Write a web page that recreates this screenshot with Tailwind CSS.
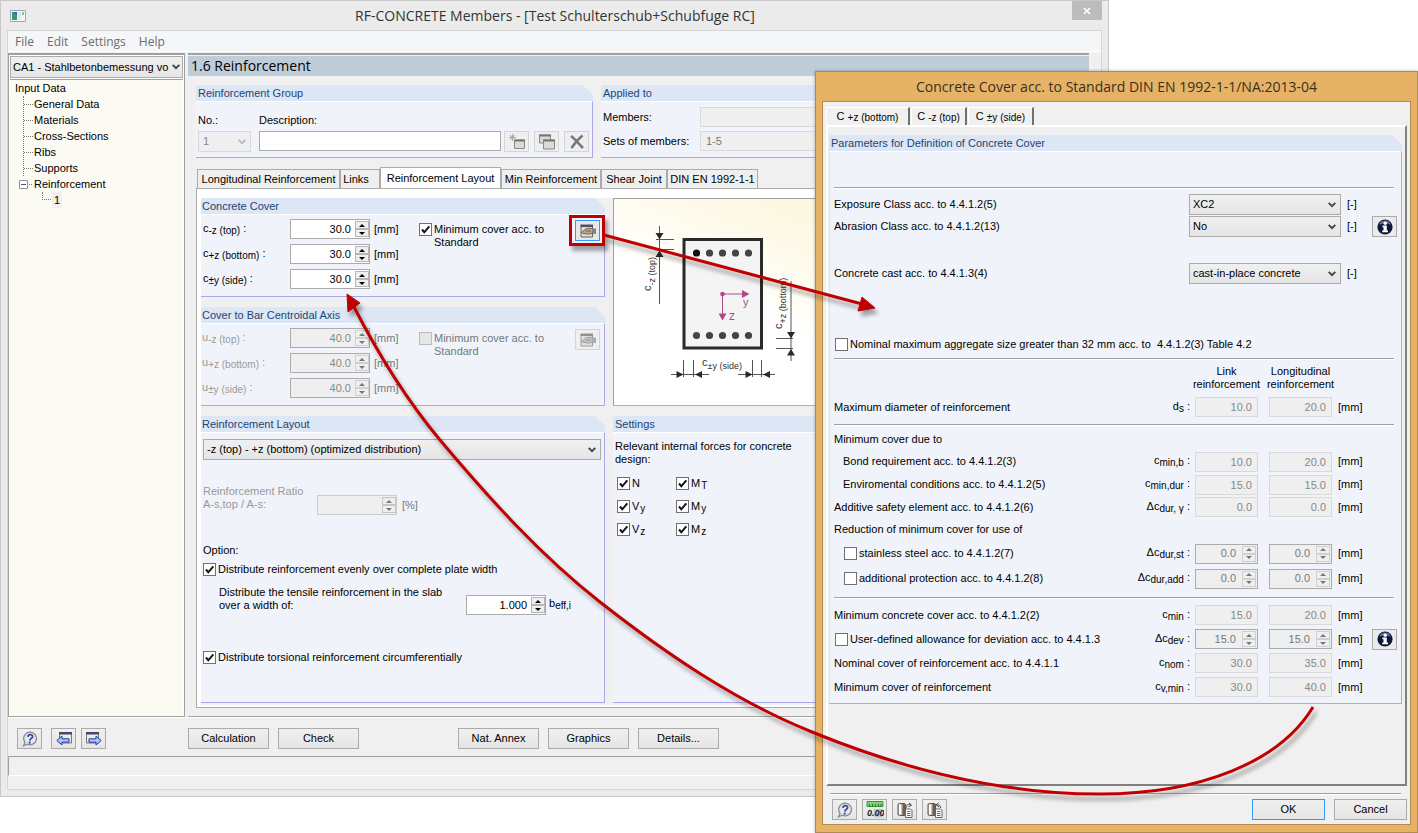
<!DOCTYPE html>
<html lang="en">
<head>
<meta charset="utf-8">
<title>RF-CONCRETE Members</title>
<script src="https://cdn.jsdelivr.net/npm/@tailwindcss/browser@4"></script>
</head>
<body class="bg-white">
<svg class="hidden" aria-hidden="true">
  <symbol id="tick" viewBox="0 0 13 13"><path d="M3 6.5 5.3 9.3 10.3 3.3" fill="none" stroke="#111" stroke-width="2"/></symbol>
  <symbol id="chev" viewBox="0 0 8 6"><path d="M.7.8 4 4.2 7.3.8" fill="none" stroke="currentColor" stroke-width="1.9"/></symbol>
  <symbol id="up" viewBox="0 0 6 3"><path d="M0 3 3 0 6 3z" fill="currentColor"/></symbol>
  <symbol id="down" viewBox="0 0 6 3"><path d="M0 0 3 3 6 0z" fill="currentColor"/></symbol>
  <symbol id="info" viewBox="0 0 16 16"><circle cx="8" cy="8" r="7.6" fill="#0d1838"/><path d="M2 6a6.3 6.3 0 0 1 12 0c-3-2-9-2-12 0z" fill="#5c6c9c"/><circle cx="8.2" cy="4.2" r="1.7" fill="#fff"/><path d="M5.4 6.600h4.400v5h1.200v1.600H5.200v-1.600h1.300V8.200H5.400z" fill="#fff"/></symbol>
  <symbol id="help" viewBox="0 0 16 16"><path d="M8.2 1.200a6.500 6.300 0 1 1-3 12L1.500 14.800 3 11.200A6.500 6.300 0 0 1 8.200 1.200z" fill="#e4e7f0" stroke="#8a8a92" stroke-width="1.3"/><path d="M5.9 5.900c.2-3 5-2.900 4.700-.2C10.400 7.500 8 7.400 7.900 9.600" fill="none" stroke="#33488c" stroke-width="1.7"/><circle cx="7.7" cy="11.7" r="1.1" fill="#33488c"/></symbol>
  <symbol id="hand" viewBox="0 0 16 14"><path d="M1 1.500h11.500v11.500H1z" fill="#dcdcdc" stroke="#666"/><path d="M.5 .5H13v2.500H.5z" fill="#4b5266"/><path d="M1.500 8.500 6 4.800C8 4.200 10 4 13 4.800V9c-2 1-3 1-4 .6-1 1.200-2.400 1-2.800-.4L4 9.800z" fill="#c0a48e" stroke="#5d4b40" stroke-width=".8"/><path d="M6 7.500 9 6.500l2 1.500" fill="none" stroke="#5d4b40" stroke-width=".8"/><path d="M12.700 4.500H16v5.500h-3.300z" fill="#7f858f"/></symbol>
  <symbol id="paste" viewBox="0 0 16 16"><rect x="1" y="1.500" width="7.500" height="12" rx="1.500" fill="#c9bfb4" stroke="#5c534c"/><path d="M2 2.500h2v10H2z" fill="#fff"/><path d="M5.500 2h2.500v11H5.500z" fill="#6e5c50"/><path d="M8.500 7h5l1.500 1.500V15.500H8.500z" fill="#fff" stroke="#666"/><path d="M10 9.500h3.500M10 11.500h3.500M10 13.500h3.500" stroke="#666"/></symbol>
</svg>

<div class="relative min-h-screen overflow-hidden font-['Liberation_Sans',sans-serif] text-[11px] leading-[13px] text-black">

  <!-- Main window -->
  <main class="mr-[309px] flex min-h-[797px] flex-col border border-[#c8c8c8] bg-[#ebebeb] px-[6px] pb-[6px]">
    <header class="flex h-[29px] items-center">
      <svg class="ml-[3px] h-3 w-4" viewBox="0 0 16 12"><path d="M.5.5h15v11H.5z" fill="#f4f4f4" stroke="#9aa"/><path d="M2 2h5v8H2z" fill="#3f8f86"/><path d="M4 2h3v4z" fill="#3f62a0"/><path d="M8 2h3v8H8z" fill="#dfe8e8"/><path d="M12 2h2v3h-2z" fill="#7ec6a4"/></svg>
      <h1 class="flex-1 pl-3 text-center font-['Open_Sans',sans-serif] text-[14px] leading-5 text-[#333]">RF-CONCRETE Members - [Test Schulterschub+Schubfuge RC]</h1>
      <button aria-label="Close" class="grid h-[19px] w-[30px] place-items-center self-start bg-[#bcbcbc]"><svg class="size-2" viewBox="0 0 8 8"><path d="M1 1l6 6M7 1 1 7" stroke="#fff" stroke-width="1.600"/></svg></button>
    </header>
    <div class="flex flex-1 flex-col border border-[#d6d6d6] bg-[#f0f0f0]">
      <nav class="flex h-[21px] items-center gap-[13px] border-b border-white bg-[#f5f6f7] px-[7px] font-['Open_Sans',sans-serif] text-[12px] text-[#6d6d6d]">
        <a href="#">File</a><a href="#">Edit</a><a href="#">Settings</a><a href="#">Help</a>
      </nav>

      <div class="mt-px flex flex-1 gap-[3px]">
        <!-- Navigator -->
        <aside class="flex w-[177px] flex-col border border-t-2 border-[#a0a0a0] bg-white pl-px pr-px">
          <label class="mt-px grid h-[22px] items-center border border-[#ababab] bg-linear-to-b from-[#f0f0f0] to-[#e5e5e5]">
            <select aria-label="Case" class="col-start-1 row-start-1 w-full appearance-none overflow-hidden px-[2px]"><option>CA1 - Stahlbetonbemessung vo</option></select>
            <svg class="pointer-events-none col-start-1 row-start-1 mr-[2px] h-[6px] w-2 justify-self-end text-[#444]"><use href="#chev"/></svg>
          </label>
          <ul class="mt-px flex-1 border-t border-[#a0a0a0] bg-[#fcfbf3] pl-[5px] leading-4">
            <li>Input Data
              <ul class="ml-[8px] border-l border-dotted border-[#777] [&>li]:flex [&>li]:h-4 [&>li]:items-center [&>li]:gap-px">
                <li><i class="w-[9px] border-t border-dotted border-[#777]"></i>General Data</li>
                <li><i class="w-[9px] border-t border-dotted border-[#777]"></i>Materials</li>
                <li><i class="w-[9px] border-t border-dotted border-[#777]"></i>Cross-Sections</li>
                <li><i class="w-[9px] border-t border-dotted border-[#777]"></i>Ribs</li>
                <li><i class="w-[9px] border-t border-dotted border-[#777]"></i>Supports</li>
              </ul>
              <div class="ml-1 flex h-4 items-center gap-px"><button aria-label="Collapse" class="grid size-[9px] place-items-center rounded-[1px] border border-[#8c8c8c] bg-white"><i class="h-px w-[5px] bg-[#3a4fa0]"></i></button><i class="w-[3px] border-t border-dotted border-[#777]"></i><span class="ml-px">Reinforcement</span></div>
              <div class="ml-[27px] flex h-4"><i class="h-2 w-[9px] border-b border-l border-dotted border-[#777]"></i><span class="ml-px bg-[#f0f0f0] px-[2px]">1</span></div>
            </li>
          </ul>
        </aside>

        <!-- Work area -->
        <div class="mr-3 flex flex-1 flex-col border-b border-t-2 border-[#a0a0a0]">
          <h2 class="mt-px h-[20px] bg-[#bfcddb] pl-[3px] font-['Open_Sans',sans-serif] text-[14px] leading-5">1.6 Reinforcement</h2>
          <div class="mt-[9px] flex gap-2 pl-[8px]">
            <section class="w-[397px]">
              <h3 class="h-4 bg-[#dce6f5] pl-[2px] leading-4 text-[#1d4573] [clip-path:polygon(0_0,calc(100%-10px)_0,100%_10px,100%_100%,0_100%)]">Reinforcement Group</h3>
              <div class="flex h-[57px] border-b border-r border-[#a8a8ec] border-t border-t-white bg-[#f0f4fa] pl-[2px] pt-[12px]">
                <div class="w-[61px]">
                  <label for="no">No.:</label>
                  <div class="mt-[4px] grid h-[21px] w-[53px] items-center border border-[#d9d9d9] bg-[#efefef] text-[#888]">
                    <select id="no" disabled class="col-start-1 row-start-1 appearance-none px-1"><option>1</option></select>
                    <svg class="pointer-events-none col-start-1 row-start-1 mr-1 h-[6px] w-2 justify-self-end text-[#bbb]"><use href="#chev"/></svg>
                  </div>
                </div>
                <div class="w-[242px]">
                  <label for="desc">Description:</label>
                  <input id="desc" class="mt-[4px] block h-5 w-full border border-[#ababab] bg-white px-1">
                </div>
                <div class="ml-[3px] flex gap-[5px] self-start pt-[17px] [&>button]:grid [&>button]:h-[21px] [&>button]:w-[25px] [&>button]:place-items-center [&>button]:border [&>button]:border-[#d4d4d4] [&>button]:bg-[#efefef]">
                  <button aria-label="New"><svg class="size-4" viewBox="0 0 16 16"><path d="M5.500 6h10v8.500h-10z" fill="#dadad6" stroke="#888"/><path d="M5 5.500h11v2H5z" fill="#777"/><path d="M3.500 0v7M0 3.500h7M1 1l5 5M6 1 1 6" stroke="#aaa"/></svg></button>
                  <button aria-label="Copy"><svg class="size-4" viewBox="0 0 16 16"><path d="M.5 1h11v8h-11z" fill="#dadad6" stroke="#888"/><path d="M0 .5h12v2H0z" fill="#777"/><path d="M4.500 6h11v9h-11z" fill="#dadad6" stroke="#888"/><path d="M4 5.500h12v2H4z" fill="#777"/></svg></button>
                  <button aria-label="Delete"><svg class="size-4" viewBox="0 0 16 16"><path d="M2 2c3 2 8 8 12 12M13.500 1.500C9 5 5 10 2.500 14" fill="none" stroke="#777" stroke-width="2.600"/></svg></button>
                </div>
              </div>
            </section>
            <section class="flex-1">
              <h3 class="h-4 bg-[#dce6f5] pl-[2px] leading-4 text-[#1d4573]">Applied to</h3>
              <div class="flex h-[57px] flex-col gap-[4px] border-b border-[#a8a8ec] border-t border-t-white bg-[#f0f4fa] pl-[2px] pt-[5px]">
                <div class="flex h-5 items-center"><label for="mem" class="w-[97px]">Members:</label><input id="mem" disabled class="h-5 flex-1 border border-[#d9d9d9] bg-[#efefef]"></div>
                <div class="flex h-5 items-center"><label for="sets" class="w-[97px]">Sets of members:</label><input id="sets" disabled value="1-5" class="h-5 flex-1 border border-[#d9d9d9] bg-[#efefef] px-[5px] text-[#777]"></div>
              </div>
            </section>
          </div>

          <!-- Tabs -->
          <div class="mt-[9px] flex items-end pl-[9px] [&>button]:h-[19px] [&>button]:border [&>button]:border-b-0 [&>button]:border-[#ababab] [&>button]:bg-[#efefef]" role="tablist">
            <button role="tab" class="w-[143px]">Longitudinal Reinforcement</button>
            <button role="tab" class="w-[40px] pr-2">Links</button>
            <span class="-mb-px flex h-[22px] w-[121px] justify-center border border-b-0 border-[#ababab] bg-white pt-[4px]" role="tab">Reinforcement Layout</span>
            <button role="tab" class="w-[100px]">Min Reinforcement</button>
            <button role="tab" class="w-[66px]">Shear Joint</button>
            <button role="tab" class="w-[91px]">DIN EN 1992-1-1</button>
          </div>
          <div class="mb-[8px] ml-[8px] flex flex-1 flex-col border border-r-0 border-[#ababab] bg-white pb-[2px] pl-[4px] pt-[9px]">
            <div class="grid flex-1 grid-cols-[404px_1fr] grid-rows-[auto_auto_1fr] gap-x-2 gap-y-[10px] bg-[#f0f0f0] pb-[2px]">

              <section>
                <h3 class="h-4 bg-[#dce6f5] pl-px leading-4 text-[#1d4573] [clip-path:polygon(0_0,calc(100%-10px)_0,100%_10px,100%_100%,0_100%)]">Concrete Cover</h3>
                <div class="flex h-[83px] border-b border-r border-[#a8a8ec] border-t border-t-white bg-[#f0f4fa] pl-[2px] pt-1">
                  <div class="flex w-[216px] flex-col gap-[5px] [&>div]:flex [&>div]:h-5 [&>div]:items-center [&_button]:grid [&_button]:h-2 [&_button]:w-[14px] [&_button]:place-items-center [&_button]:border [&_button]:border-[#b5b5b5] [&_button]:bg-[#efefef] [&_small]:align-[-2px] [&_small]:text-[10px] [&_svg]:h-[3px] [&_svg]:w-[6px] [&_input]:w-[60px] [&_input]:text-right">
                    <div><label for="c1" class="w-[87px]">c<small>-z (top)</small> :</label><span class="mr-[4px] flex h-5 w-20 items-center gap-1 border border-[#ababab] bg-white"><input id="c1" value="30.0"><span><button aria-label="Up"><svg><use href="#up"/></svg></button><button aria-label="Down"><svg><use href="#down"/></svg></button></span></span>[mm]</div>
                    <div><label for="c2" class="w-[87px]">c<small>+z (bottom)</small> :</label><span class="mr-[4px] flex h-5 w-20 items-center gap-1 border border-[#ababab] bg-white"><input id="c2" value="30.0"><span><button aria-label="Up"><svg><use href="#up"/></svg></button><button aria-label="Down"><svg><use href="#down"/></svg></button></span></span>[mm]</div>
                    <div><label for="c3" class="w-[87px]">c<small>±y (side)</small> :</label><span class="mr-[4px] flex h-5 w-20 items-center gap-1 border border-[#ababab] bg-white"><input id="c3" value="30.0"><span><button aria-label="Up"><svg><use href="#up"/></svg></button><button aria-label="Down"><svg><use href="#down"/></svg></button></span></span>[mm]</div>
                  </div>
                  <label class="flex w-[156px] gap-[2px] pt-[4px]"><span class="grid size-[13px] shrink-0"><input type="checkbox" checked class="peer col-start-1 row-start-1 size-[13px] appearance-none border border-[#707070] bg-white"><svg class="pointer-events-none col-start-1 row-start-1 hidden size-[13px] peer-checked:block"><use href="#tick"/></svg></span><span>Minimum cover acc. to<br>Standard</span></label>
                  <button aria-label="Cover details" class="mt-px grid h-[21px] w-[25px] place-items-center border border-[#3399ff] bg-[#e8e8e8]"><svg class="h-[14px] w-4"><use href="#hand"/></svg></button>
                </div>
              </section>

              <figure class="row-span-2 border-b border-l border-t border-[#a0a0a0] border-b-[#a8a8ec] bg-linear-to-tr from-white from-35% to-[#fdf5d8] to-75%">
                <svg class="h-[205px] w-[204px]" viewBox="614 199 204 205" font-family="Liberation Sans" font-size="11" fill="#333">
                  <path d="M684 239.500h77.500v108.500H684z" fill="#f4f4f4" stroke="#2a2a28" stroke-width="3"/>
                  <g fill="#444"><circle cx="696.500" cy="253" r="3.600" fill="#111"/><circle cx="709.500" cy="253" r="3.600"/><circle cx="722.500" cy="253" r="3.600"/><circle cx="735.500" cy="253" r="3.600"/><circle cx="748.500" cy="253" r="3.600"/><circle cx="696.500" cy="335.500" r="3.600"/><circle cx="709.500" cy="335.500" r="3.600"/><circle cx="722.500" cy="335.500" r="3.600"/><circle cx="735.500" cy="335.500" r="3.600"/><circle cx="748.500" cy="335.500" r="3.600"/></g>
                  <g fill="#b04a86"><circle cx="722.500" cy="294" r="2.300"/><path d="M722 293.500h22v1h-22zM722 294h1v20h-1zM742 290l7.500 4-7.500 4zM718.500 313.500h8l-4 7z"/><text x="743" y="306" font-size="11">y</text><text x="729" y="320" font-size="12">z</text></g>
                  <path d="M659.500 226v78M656 239.500h18M656 249.500h18M791 281v80M776 338.500h17M776 348.500h17M683.500 360v17M693.500 360v17M752.500 360v17M761.500 360v17M671 374.500h38M738 374.500h37" fill="none" stroke="#555" stroke-width="1"/>
                  <path d="M655.500 233h8l-4 6.500zM655.500 257h8l-4-6.500zM787 332h8l-4 6.500zM787 355.500h8l-4-6.500zM676.500 371v7l7-3.500zM702 371v7l-7-3.500zM745.500 371v7l7-3.500zM770 371v7l-7-3.500z" fill="#2a2a28"/>
                  <text x="702" y="366">c<tspan dy="3" font-size="9">±y (side)</tspan></text>
                  <text transform="translate(651 291) rotate(-90)">c<tspan dy="4" font-size="9">-z (top)</tspan></text>
                  <text transform="translate(782 329) rotate(-90)">c<tspan dy="4" font-size="9">+z (bottom)</tspan></text>
                </svg>
              </figure>

              <section>
                <h3 class="h-4 bg-[#dce6f5] pl-px leading-4 text-[#1d4573] [clip-path:polygon(0_0,calc(100%-10px)_0,100%_10px,100%_100%,0_100%)]">Cover to Bar Centroidal Axis</h3>
                <div class="flex h-[83px] border-b border-r border-[#a8a8ec] border-t border-t-white bg-[#f0f4fa] pl-px pt-1 text-[#777]">
                  <div class="flex w-[217px] flex-col gap-[5px] [&>div]:flex [&>div]:h-5 [&>div]:items-center [&_label]:text-[#999] [&_button]:grid [&_button]:h-2 [&_button]:w-[14px] [&_button]:place-items-center [&_button]:border [&_button]:border-[#d0d0d0] [&_button]:bg-[#efefef] [&_small]:align-[-2px] [&_small]:text-[10px] [&_svg]:h-[3px] [&_svg]:w-[6px] [&_input]:w-[60px] [&_input]:text-right [&_input]:text-[#888]">
                    <div><label for="u1" class="w-[88px]">u<small>-z (top)</small> :</label><span class="mr-[4px] flex h-5 w-20 items-center gap-1 border border-[#ababab] bg-[#efefef]"><input id="u1" disabled value="40.0"><span><button aria-label="Up"><svg><use href="#up"/></svg></button><button aria-label="Down"><svg><use href="#down"/></svg></button></span></span>[mm]</div>
                    <div><label for="u2" class="w-[88px]">u<small>+z (bottom)</small> :</label><span class="mr-[4px] flex h-5 w-20 items-center gap-1 border border-[#ababab] bg-[#efefef]"><input id="u2" disabled value="40.0"><span><button aria-label="Up"><svg><use href="#up"/></svg></button><button aria-label="Down"><svg><use href="#down"/></svg></button></span></span>[mm]</div>
                    <div><label for="u3" class="w-[88px]">u<small>±y (side)</small> :</label><span class="mr-[4px] flex h-5 w-20 items-center gap-1 border border-[#ababab] bg-[#efefef]"><input id="u3" disabled value="40.0"><span><button aria-label="Up"><svg><use href="#up"/></svg></button><button aria-label="Down"><svg><use href="#down"/></svg></button></span></span>[mm]</div>
                  </div>
                  <label class="flex w-[156px] gap-[2px] pt-[4px]"><input type="checkbox" disabled class="size-[13px] shrink-0 appearance-none border border-[#bbb] bg-[#e6e6e6]"><span>Minimum cover acc. to<br>Standard</span></label>
                  <button aria-label="Cover details" disabled class="mt-px grid h-[21px] w-[25px] place-items-center border border-[#d4d4d4] bg-[#efefef]"><svg class="h-[14px] w-4 opacity-60 grayscale"><use href="#hand"/></svg></button>
                </div>
              </section>

              <section class="flex flex-col">
                <h3 class="h-4 bg-[#dce6f5] pl-px leading-4 text-[#1d4573] [clip-path:polygon(0_0,calc(100%-10px)_0,100%_10px,100%_100%,0_100%)]">Reinforcement Layout</h3>
                <div class="flex-1 border-b border-r border-[#a8a8ec] border-t border-t-white bg-[#f0f4fa] pl-[2px] pr-[3px] pt-[6px]">
                  <div class="grid h-[21px] items-center border border-[#ababab] bg-linear-to-b from-[#f0f0f0] to-[#e5e5e5]">
                    <select aria-label="Reinforcement layout" class="col-start-1 row-start-1 appearance-none px-[3px]"><option>-z (top) - +z (bottom) (optimized distribution)</option></select>
                    <svg class="pointer-events-none col-start-1 row-start-1 mr-1 h-[6px] w-2 justify-self-end text-[#444]"><use href="#chev"/></svg>
                  </div>
                  <div class="mt-[25px] flex text-[#777]">
                    <label for="ratio" class="w-[114px] text-[#999]">Reinforcement Ratio<br>A-s,top / A-s:</label>
                    <span class="mr-[5px] mt-[10px] flex h-5 w-20 items-center gap-1 border border-[#ccc] bg-[#efefef] [&_button]:grid [&_button]:h-2 [&_button]:w-[14px] [&_button]:place-items-center [&_button]:border [&_button]:border-[#c5c5c5] [&_svg]:h-[3px] [&_svg]:w-[6px]"><input id="ratio" disabled class="w-[60px]"><span><button aria-label="Up"><svg><use href="#up"/></svg></button><button aria-label="Down"><svg><use href="#down"/></svg></button></span></span>
                    <span class="mt-[14px]">[%]</span>
                  </div>
                  <p class="mt-[29px]">Option:</p>
                  <label class="mt-[6px] flex gap-[2px]"><span class="grid size-[13px] shrink-0"><input type="checkbox" checked class="peer col-start-1 row-start-1 size-[13px] appearance-none border border-[#707070] bg-white"><svg class="pointer-events-none col-start-1 row-start-1 hidden size-[13px] peer-checked:block"><use href="#tick"/></svg></span>Distribute reinforcement evenly over complete plate width</label>
                  <div class="mt-[10px] flex pl-4">
                    <label for="beff" class="w-[247px]">Distribute the tensile reinforcement in the slab<br>over a width of:</label>
                    <span class="mr-[3px] mt-[9px] flex h-5 w-20 items-center gap-1 border border-[#ababab] bg-white [&_button]:grid [&_button]:h-2 [&_button]:w-[14px] [&_button]:place-items-center [&_button]:border [&_button]:border-[#b5b5b5] [&_button]:bg-[#efefef] [&_svg]:h-[3px] [&_svg]:w-[6px]"><input id="beff" value="1.000" class="w-[60px] text-right"><span><button aria-label="Up"><svg><use href="#up"/></svg></button><button aria-label="Down"><svg><use href="#down"/></svg></button></span></span>
                    <span class="mt-[11px]">b<small class="align-[-2px] text-[10px]">eff,i</small></span>
                  </div>
                  <label class="mt-[36px] flex gap-[2px]"><span class="grid size-[13px] shrink-0"><input type="checkbox" checked class="peer col-start-1 row-start-1 size-[13px] appearance-none border border-[#707070] bg-white"><svg class="pointer-events-none col-start-1 row-start-1 hidden size-[13px] peer-checked:block"><use href="#tick"/></svg></span>Distribute torsional reinforcement circumferentially</label>
                </div>
              </section>

              <section class="flex flex-col">
                <h3 class="h-4 bg-[#dce6f5] pl-[2px] leading-4 text-[#1d4573]">Settings</h3>
                <div class="flex-1 border-b border-[#a8a8ec] border-t border-t-white bg-[#f0f4fa] pl-[2px] pt-[7px]">
                  <p>Relevant internal forces for concrete<br>design:</p>
                  <div class="mt-[11px] grid grid-cols-[59px_59px] gap-y-[10px] pl-[2px] [&>label]:flex [&>label]:h-[13px] [&>label]:gap-[2px] [&_small]:align-[-2px] [&_small]:text-[10px]">
                    <label><span class="grid size-[13px] shrink-0"><input type="checkbox" checked class="peer col-start-1 row-start-1 size-[13px] appearance-none border border-[#707070] bg-white"><svg class="pointer-events-none col-start-1 row-start-1 hidden size-[13px] peer-checked:block"><use href="#tick"/></svg></span><span>N</span></label>
                    <label><span class="grid size-[13px] shrink-0"><input type="checkbox" checked class="peer col-start-1 row-start-1 size-[13px] appearance-none border border-[#707070] bg-white"><svg class="pointer-events-none col-start-1 row-start-1 hidden size-[13px] peer-checked:block"><use href="#tick"/></svg></span><span>M<small class="ml-px">T</small></span></label>
                    <label><span class="grid size-[13px] shrink-0"><input type="checkbox" checked class="peer col-start-1 row-start-1 size-[13px] appearance-none border border-[#707070] bg-white"><svg class="pointer-events-none col-start-1 row-start-1 hidden size-[13px] peer-checked:block"><use href="#tick"/></svg></span><span>V<small class="ml-px">y</small></span></label>
                    <label><span class="grid size-[13px] shrink-0"><input type="checkbox" checked class="peer col-start-1 row-start-1 size-[13px] appearance-none border border-[#707070] bg-white"><svg class="pointer-events-none col-start-1 row-start-1 hidden size-[13px] peer-checked:block"><use href="#tick"/></svg></span><span>M<small class="ml-px">y</small></span></label>
                    <label><span class="grid size-[13px] shrink-0"><input type="checkbox" checked class="peer col-start-1 row-start-1 size-[13px] appearance-none border border-[#707070] bg-white"><svg class="pointer-events-none col-start-1 row-start-1 hidden size-[13px] peer-checked:block"><use href="#tick"/></svg></span><span>V<small class="ml-px">z</small></span></label>
                    <label><span class="grid size-[13px] shrink-0"><input type="checkbox" checked class="peer col-start-1 row-start-1 size-[13px] appearance-none border border-[#707070] bg-white"><svg class="pointer-events-none col-start-1 row-start-1 hidden size-[13px] peer-checked:block"><use href="#tick"/></svg></span><span>M<small class="ml-px">z</small></span></label>
                  </div>
                </div>
              </section>
            </div>
          </div>
        </div>
      </div>

      <!-- Command bar -->
      <div class="flex h-[39px] items-center border-t border-white pl-[9px] pt-[3px] [&_button]:grid [&_button]:h-[21px] [&_button]:place-items-center [&_button]:border [&_button]:border-[#ababab] [&_button]:bg-linear-to-b [&_button]:from-[#f0f0f0] [&_button]:to-[#e5e5e5]">
        <button aria-label="Help" class="w-[25px]"><svg class="size-4"><use href="#help"/></svg></button>
        <button aria-label="Previous" class="ml-[9px] w-[25px]"><svg class="size-4" viewBox="0 0 16 16"><path d="M3.500 2h12v10h-12z" fill="#ececec" stroke="#777"/><path d="M3 1h13v2.500H3z" fill="#444a66"/><path d="M.8 9.500 6 5v2.800h7v3.400H6V14z" fill="#a9c4f4" stroke="#1f3f94"/></svg></button>
        <button aria-label="Next" class="ml-[5px] w-[25px]"><svg class="size-4" viewBox="0 0 16 16"><path d="M.5 2h12v10H.5z" fill="#ececec" stroke="#777"/><path d="M0 1h13v2.500H0z" fill="#444a66"/><path d="M15.200 9.500 10 5v2.800H3v3.400h7V14z" fill="#a9c4f4" stroke="#1f3f94"/></svg></button>
        <button class="ml-[82px] w-[81px]">Calculation</button>
        <button class="ml-[9px] w-[81px]">Check</button>
        <button class="ml-[99px] w-[81px]">Nat. Annex</button>
        <button class="ml-[9px] w-[81px]">Graphics</button>
        <button class="ml-[9px] w-[81px]">Details...</button>
      </div>
      <footer class="mb-[13px] h-5 border-b border-l border-t border-[#a0a0a0] border-b-white"></footer>
    </div>
  </main>

  <!-- Concrete cover dialog -->
  <div role="dialog" aria-labelledby="dlg" class="absolute right-0 top-[71px] left-[815px] flex min-h-[762px] flex-col border border-[#b08a4e] bg-[#e6b266] px-[6px] pb-[7px] shadow-[0_0_3px_rgba(0,0,0,0.3)]">
    <h2 id="dlg" class="h-[29px] pt-[5px] text-center font-['Open_Sans',sans-serif] text-[14px] leading-5 text-[#3a3022]">Concrete Cover acc. to Standard DIN EN 1992-1-1/NA:2013-04</h2>
    <div class="flex flex-1 flex-col border border-[#b08a4e] bg-[#f0f0f0] pl-[3px] pr-[3px] pt-1">
      <div class="flex items-end gap-px [&>button]:h-[18px] [&>button]:border-l [&>button]:border-t [&>button]:border-white [&>button]:border-r-2 [&>button]:border-r-[#707070] [&_small]:align-[-1px] [&_small]:text-[10px]" role="tablist">
        <button role="tab" class="mt-px w-[84px]"><span>C <small>+z (bottom)</small></span></button>
        <button role="tab" class="w-[56px]"><span>C <small>-z (top)</small></span></button>
        <button role="tab" class="w-[66px]"><span>C <small>±y (side)</small></span></button>
      </div>
      <div class="flex flex-1 flex-col border-2 border-white border-b-[#808080] border-r-[#808080] pb-px pl-px pr-[3px] pt-[8px]">
        <section>
          <h3 class="h-4 bg-[#dce6f5] pl-[2px] leading-4 text-[#1d4573] [clip-path:polygon(0_0,calc(100%-10px)_0,100%_10px,100%_100%,0_100%)]">Parameters for Definition of Concrete Cover</h3>
          <div class="border border-[#a8a8ec] border-l-[#dce6f5] border-t-white bg-[#f0f4fa] pb-1 pl-1 pr-[7px]">
            <div class="mt-[35px] h-[2px] border-b border-t border-[#a0a0a0] border-b-white"></div>
            <div class="-mr-[3px] mt-[5px] grid grid-cols-[1fr_152px_19px_25px] items-center gap-x-[6px] gap-y-px [&_select]:col-start-1 [&_select]:row-start-1 [&_select]:w-full [&_select]:appearance-none [&_select]:px-[3px] [&>div]:grid [&>div]:h-[21px] [&>div]:items-center [&>div]:border [&>div]:border-[#ababab] [&>div]:bg-linear-to-b [&>div]:from-[#f0f0f0] [&>div]:to-[#e5e5e5]">
              <label for="ex">Exposure Class acc. to 4.4.1.2(5)</label><div><select id="ex"><option>XC2</option></select><svg class="pointer-events-none col-start-1 row-start-1 mr-1 h-[6px] w-2 justify-self-end text-[#444]"><use href="#chev"/></svg></div><span>[-]</span><span></span>
              <label for="ab">Abrasion Class acc. to 4.4.1.2(13)</label><div><select id="ab"><option>No</option></select><svg class="pointer-events-none col-start-1 row-start-1 mr-1 h-[6px] w-2 justify-self-end text-[#444]"><use href="#chev"/></svg></div><span>[-]</span><button aria-label="Info" class="grid h-[21px] w-[25px] place-items-center border border-[#ababab] bg-[#ebebeb]"><svg class="size-4"><use href="#info"/></svg></button>
              <label for="cc" class="mt-[25px]">Concrete cast acc. to 4.4.1.3(4)</label><div class="mt-[25px]"><select id="cc"><option>cast-in-place concrete</option></select><svg class="pointer-events-none col-start-1 row-start-1 mr-1 h-[6px] w-2 justify-self-end text-[#444]"><use href="#chev"/></svg></div><span class="mt-[25px]">[-]</span>
            </div>
            <label class="ml-px mt-[54px] flex items-center gap-[2px] whitespace-pre"><input type="checkbox" class="size-[13px] appearance-none border border-[#707070] bg-white">Nominal maximum aggregate size greater than 32 mm acc. to  4.4.1.2(3) Table 4.2</label>
            <div class="mt-[7px] h-[2px] border-b border-t border-[#a0a0a0] border-b-white"></div>

            <!-- Cover values: label, symbol, link value, longitudinal value, unit, info -->
            <div class="[&>div]:-mr-[3px] [&>div]:grid [&>div]:grid-cols-[1fr_auto_74px_69px_34px_25px] [&>div]:items-center [&_small]:align-[-2px] [&_small]:text-[10px] [&_i]:mr-[5px] [&_i]:not-italic [&_input[type=checkbox]]:size-[13px] [&_input[type=checkbox]]:appearance-none [&_input[type=checkbox]]:border [&_input[type=checkbox]]:border-[#707070] [&_input[type=checkbox]]:bg-white [&_label]:ml-px [&_label]:flex [&_label]:items-center [&_label]:gap-[2px] [&_input[type=text]]:h-5 [&_input[type=text]]:w-[63px] [&_input[type=text]]:border [&_input[type=text]]:border-[#d9d9d9] [&_input[type=text]]:bg-[#efefef] [&_input[type=text]]:pr-[5px] [&_input[type=text]]:text-right [&_input[type=text]]:text-[#888] [&_b]:flex [&_b]:h-5 [&_b]:w-[63px] [&_b]:items-center [&_b]:justify-between [&_b]:border [&_b]:border-[#ababab] [&_b]:bg-[#efefef] [&_b]:pr-px [&_b]:font-normal [&_b]:text-[#777] [&_b>input]:w-[40px] [&_b>input]:text-right [&_b_button]:grid [&_b_button]:h-2 [&_b_button]:w-[14px] [&_b_button]:place-items-center [&_b_button]:border [&_b_button]:border-[#d0d0d0] [&_b_svg]:h-[3px] [&_b_svg]:w-[6px]">
              <div class="h-[35px] pt-px text-center"><span></span><span></span><span class="flex w-[63px] justify-center">Link<br>reinforcement</span><span class="flex w-[63px] justify-center">Longitudinal<br>reinforcement</span></div>
              <div class="h-6"><span>Maximum diameter of reinforcement</span><i>d<small>s</small> :</i><input type="text" disabled aria-label="ds link" value="10.0"><input type="text" disabled aria-label="ds longitudinal" value="20.0"><span>[mm]</span></div>
              <hr class="mt-[5px] h-[2px] border-b border-t border-[#a0a0a0] border-b-white">
              <p class="mt-[2px] h-[22px] leading-[22px]">Minimum cover due to</p>
              <div class="h-[23px]"><span class="pl-[9px]">Bond requirement acc. to 4.4.1.2(3)</span><i>c<small>min,b</small> :</i><input type="text" disabled aria-label="c min,b link" value="10.0"><input type="text" disabled aria-label="c min,b longitudinal" value="20.0"><span>[mm]</span></div>
              <div class="h-[23px]"><span class="pl-[9px]">Enviromental conditions acc. to 4.4.1.2(5)</span><i>c<small>min,dur</small> :</i><input type="text" disabled aria-label="c min,dur link" value="15.0"><input type="text" disabled aria-label="c min,dur longitudinal" value="15.0"><span>[mm]</span></div>
              <div class="h-[22px]"><span>Additive safety element acc. to 4.4.1.2(6)</span><i>Δc<small>dur, γ</small> :</i><input type="text" disabled aria-label="Δc dur,γ link" value="0.0"><input type="text" disabled aria-label="Δc dur,γ longitudinal" value="0.0"><span>[mm]</span></div>
              <p class="h-[23px] leading-[23px]">Reduction of minimum cover for use of</p>
              <div class="h-[25px]"><label class="pl-[9px]"><input type="checkbox">stainless steel acc. to 4.4.1.2(7)</label><i>Δc<small>dur,st</small> :</i><b><input disabled aria-label="Δc dur,st link" value="0.0"><span><button aria-label="Up"><svg><use href="#up"/></svg></button><button aria-label="Down"><svg><use href="#down"/></svg></button></span></b><b><input disabled aria-label="Δc dur,st longitudinal" value="0.0"><span><button aria-label="Up"><svg><use href="#up"/></svg></button><button aria-label="Down"><svg><use href="#down"/></svg></button></span></b><span>[mm]</span></div>
              <div class="h-[25px]"><label class="pl-[9px]"><input type="checkbox">additional protection acc. to 4.4.1.2(8)</label><i>Δc<small>dur,add</small> :</i><b><input disabled aria-label="Δc dur,add link" value="0.0"><span><button aria-label="Up"><svg><use href="#up"/></svg></button><button aria-label="Down"><svg><use href="#down"/></svg></button></span></b><b><input disabled aria-label="Δc dur,add longitudinal" value="0.0"><span><button aria-label="Up"><svg><use href="#up"/></svg></button><button aria-label="Down"><svg><use href="#down"/></svg></button></span></b><span>[mm]</span></div>
              <hr class="mb-1 mt-[6px] h-[2px] border-b border-t border-[#a0a0a0] border-b-white">
              <div class="h-6"><span>Minimum concrete cover acc. to 4.4.1.2(2)</span><i>c<small>min</small> :</i><input type="text" disabled aria-label="c min link" value="15.0"><input type="text" disabled aria-label="c min longitudinal" value="20.0"><span>[mm]</span></div>
              <div class="h-6"><label><input type="checkbox">User-defined allowance for deviation acc. to 4.4.1.3</label><i>Δc<small>dev</small> :</i><b><input disabled aria-label="Δc dev link" value="15.0"><span><button aria-label="Up"><svg><use href="#up"/></svg></button><button aria-label="Down"><svg><use href="#down"/></svg></button></span></b><b><input disabled aria-label="Δc dev longitudinal" value="15.0"><span><button aria-label="Up"><svg><use href="#up"/></svg></button><button aria-label="Down"><svg><use href="#down"/></svg></button></span></b><span>[mm]</span><button aria-label="Info" class="grid h-[21px] w-[25px] place-items-center border border-[#ababab] bg-[#ebebeb]"><svg class="size-4"><use href="#info"/></svg></button></div>
              <div class="h-6"><span>Nominal cover of reinforcement acc. to 4.4.1.1</span><i>c<small>nom</small> :</i><input type="text" disabled aria-label="c nom link" value="30.0"><input type="text" disabled aria-label="c nom longitudinal" value="35.0"><span>[mm]</span></div>
              <div class="h-6"><span>Minimum cover of reinforcement</span><i>c<small>v,min</small> :</i><input type="text" disabled aria-label="c v,min link" value="30.0"><input type="text" disabled aria-label="c v,min longitudinal" value="40.0"><span>[mm]</span></div>
            </div>
          </div>
        </section>
      </div>
      <hr class="ml-1 mr-[6px] mt-[7px] h-[2px] border-b border-t border-[#a0a0a0] border-b-white">
      <div class="mb-1 mt-1 flex gap-[5px] pl-[6px] [&_button]:grid [&_button]:h-[21px] [&_button]:place-items-center [&_button]:border [&_button]:bg-linear-to-b [&_button]:from-[#f0f0f0] [&_button]:to-[#e5e5e5]">
        <button aria-label="Help" class="w-[25px] border-[#ababab]"><svg class="size-4"><use href="#help"/></svg></button>
        <button aria-label="Units and decimal places" class="w-[25px] border-[#ababab]"><svg class="h-[18px] w-[18px]" viewBox="0 0 18 18"><path d="M1 .5h16v5H1z" fill="#7fd070" stroke="#3d9a3a"/><path d="M3.500 3v2.500M6.500 3v2.500M9.500 3v2.500M12.500 3v2.500M15 3v2.500" stroke="#2b7a2a"/><path d="M8 8h8.500v8.500H8z" fill="#b8c4dc"/><text x="1" y="15" font-family="Liberation Sans" font-size="9" font-weight="bold" font-style="italic" fill="#222">0.00</text></svg></button>
        <button aria-label="Load default" class="w-[25px] border-[#ababab]"><svg class="size-4" viewBox="0 0 16 16"><use href="#paste"/><path d="M9.500 5.500C9.500 2.500 11 2 13.500 2.800M12 .8l2.500 2.400-3 1.500" fill="none" stroke="#444"/></svg></button>
        <button aria-label="Save as default" class="w-[25px] border-[#ababab]"><svg class="size-4" viewBox="0 0 16 16"><use href="#paste"/><path d="M13.500 6C13.500 3 12 2.500 9.500 3M11.500.8 9.200 3l2.800 2" fill="none" stroke="#444"/></svg></button>
        <button class="ml-auto mr-1 w-[73px] border-[#3399ff]">OK</button>
        <button class="w-[73px] border-[#ababab]">Cancel</button>
      </div>
    </div>
  </div>

  <!-- Annotation frame and arrows drawn over both windows -->
  <div class="pointer-events-none absolute top-[215px] left-[569px] h-[31px] w-[36px] border-3 border-[#c00000] shadow-[3px_5px_4px_rgba(0,0,0,0.35)]"></div>
  <svg class="pointer-events-none absolute inset-0 size-full drop-shadow-[3px_5px_2px_rgba(0,0,0,0.35)]" aria-hidden="true">
    <g fill="none" stroke="#c00000" stroke-width="3">
      <path d="M604 235 862 304"/>
      <path d="M1313 707C1280 762 1200 794 1100 794C1000 794 900 768 812 732C735 701 665 653 600 602C540 555 488 497 440 440C405 398 376 350 353 305"/>
    </g>
    <path d="M875 308 862 297 858 311zM347 294 360 303 348 312z" fill="#c00000" stroke="#c00000"/>
  </svg>
</div>
</body>
</html>
